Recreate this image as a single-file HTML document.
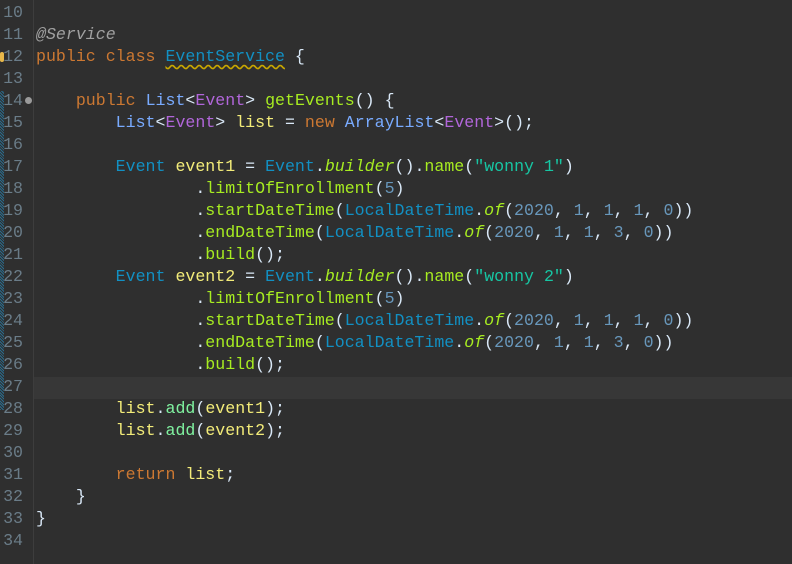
<!DOCTYPE html>
<html><head><style>
body{margin:0;background:#2f2f2f;width:792px;height:564px;overflow:hidden;position:relative;font-family:"Liberation Mono",monospace;font-size:16.6px;}
.g{position:absolute;left:0;top:0;width:33px;height:564px;background:#2f2f2f;}
.sep{position:absolute;left:33px;top:0;width:1px;height:564px;background:#3d3d3d;}
.strip{position:absolute;left:0;top:91px;width:4px;height:319px;background:repeating-linear-gradient(45deg,#2a6b8c 0 1px,#2f2f2f 1px 2px);}
.hl{position:absolute;left:34px;top:377px;width:758px;height:22px;background:#373737;}
.ln{position:absolute;left:0;width:23px;text-align:right;color:#6a7c88;line-height:22px;}
.c{position:absolute;left:36px;line-height:22px;white-space:pre;color:#d9e8f7;}
.k{color:#cc7832}.t{color:#1290c3}.p{color:#b166da}.m{color:#a7ec21}.v{color:#f3ec79}.s{color:#17c6a3}.n{color:#6897bb}.i{font-style:italic}.a{color:#a0a0a0;font-style:italic}.l{color:#79abff}.ad{color:#80f2a0}.w{color:#e6e6fa}
</style></head><body>
<div class="g"></div><div class="sep"></div><div class="strip"></div><div class="hl"></div>
<div class="ln" style="top:2px">10</div>
<div class="ln" style="top:24px">11</div>
<div class="ln" style="top:46px">12</div>
<div class="ln" style="top:68px">13</div>
<div class="ln" style="top:90px">14</div>
<div class="ln" style="top:112px">15</div>
<div class="ln" style="top:134px">16</div>
<div class="ln" style="top:156px">17</div>
<div class="ln" style="top:178px">18</div>
<div class="ln" style="top:200px">19</div>
<div class="ln" style="top:222px">20</div>
<div class="ln" style="top:244px">21</div>
<div class="ln" style="top:266px">22</div>
<div class="ln" style="top:288px">23</div>
<div class="ln" style="top:310px">24</div>
<div class="ln" style="top:332px">25</div>
<div class="ln" style="top:354px">26</div>
<div class="ln" style="top:376px">27</div>
<div class="ln" style="top:398px">28</div>
<div class="ln" style="top:420px">29</div>
<div class="ln" style="top:442px">30</div>
<div class="ln" style="top:464px">31</div>
<div class="ln" style="top:486px">32</div>
<div class="ln" style="top:508px">33</div>
<div class="ln" style="top:530px">34</div>
<div style="position:absolute;left:25px;top:97px;width:7px;height:7px;border-radius:50%;background:#9a9a9a"></div>
<div style="position:absolute;left:0;top:52px;width:4px;height:10px;background:#e8b84a;border-radius:2px"></div>
<div class="c a" style="top:24px">@Service</div>
<div class="c" style="top:46px"><span class="k">public class</span> <span class="t" style="text-decoration:underline wavy #c9a800;text-underline-offset:3px">EventService</span> {</div>
<div class="c" style="top:90px">    <span class="k">public</span> <span class="l">List</span>&lt;<span class="p">Event</span>&gt; <span class="m">getEvents</span>() {</div>
<div class="c" style="top:112px">        <span class="l">List</span>&lt;<span class="p">Event</span>&gt; <span class="v">list</span> = <span class="k">new</span> <span class="l">ArrayList</span>&lt;<span class="p">Event</span>&gt;();</div>
<div class="c" style="top:156px">        <span class="t">Event</span> <span class="v">event1</span> = <span class="t">Event</span>.<span class="m i">builder</span>().<span class="m">name</span>(<span class="s">"wonny 1"</span>)</div>
<div class="c" style="top:178px">                .<span class="m">limitOfEnrollment</span>(<span class="n">5</span>)</div>
<div class="c" style="top:200px">                .<span class="m">startDateTime</span>(<span class="t">LocalDateTime</span>.<span class="m i">of</span>(<span class="n">2020</span>, <span class="n">1</span>, <span class="n">1</span>, <span class="n">1</span>, <span class="n">0</span>))</div>
<div class="c" style="top:222px">                .<span class="m">endDateTime</span>(<span class="t">LocalDateTime</span>.<span class="m i">of</span>(<span class="n">2020</span>, <span class="n">1</span>, <span class="n">1</span>, <span class="n">3</span>, <span class="n">0</span>))</div>
<div class="c" style="top:244px">                .<span class="m">build</span>();</div>
<div class="c" style="top:266px">        <span class="t">Event</span> <span class="v">event2</span> = <span class="t">Event</span>.<span class="m i">builder</span>().<span class="m">name</span>(<span class="s">"wonny 2"</span>)</div>
<div class="c" style="top:288px">                .<span class="m">limitOfEnrollment</span>(<span class="n">5</span>)</div>
<div class="c" style="top:310px">                .<span class="m">startDateTime</span>(<span class="t">LocalDateTime</span>.<span class="m i">of</span>(<span class="n">2020</span>, <span class="n">1</span>, <span class="n">1</span>, <span class="n">1</span>, <span class="n">0</span>))</div>
<div class="c" style="top:332px">                .<span class="m">endDateTime</span>(<span class="t">LocalDateTime</span>.<span class="m i">of</span>(<span class="n">2020</span>, <span class="n">1</span>, <span class="n">1</span>, <span class="n">3</span>, <span class="n">0</span>))</div>
<div class="c" style="top:354px">                .<span class="m">build</span>();</div>
<div class="c" style="top:398px">        <span class="v">list</span>.<span class="ad">add</span>(<span class="v">event1</span>);</div>
<div class="c" style="top:420px">        <span class="v">list</span>.<span class="ad">add</span>(<span class="v">event2</span>);</div>
<div class="c" style="top:464px">        <span class="k">return</span> <span class="v">list</span>;</div>
<div class="c" style="top:486px">    }</div>
<div class="c" style="top:508px">}</div>
</body></html>
